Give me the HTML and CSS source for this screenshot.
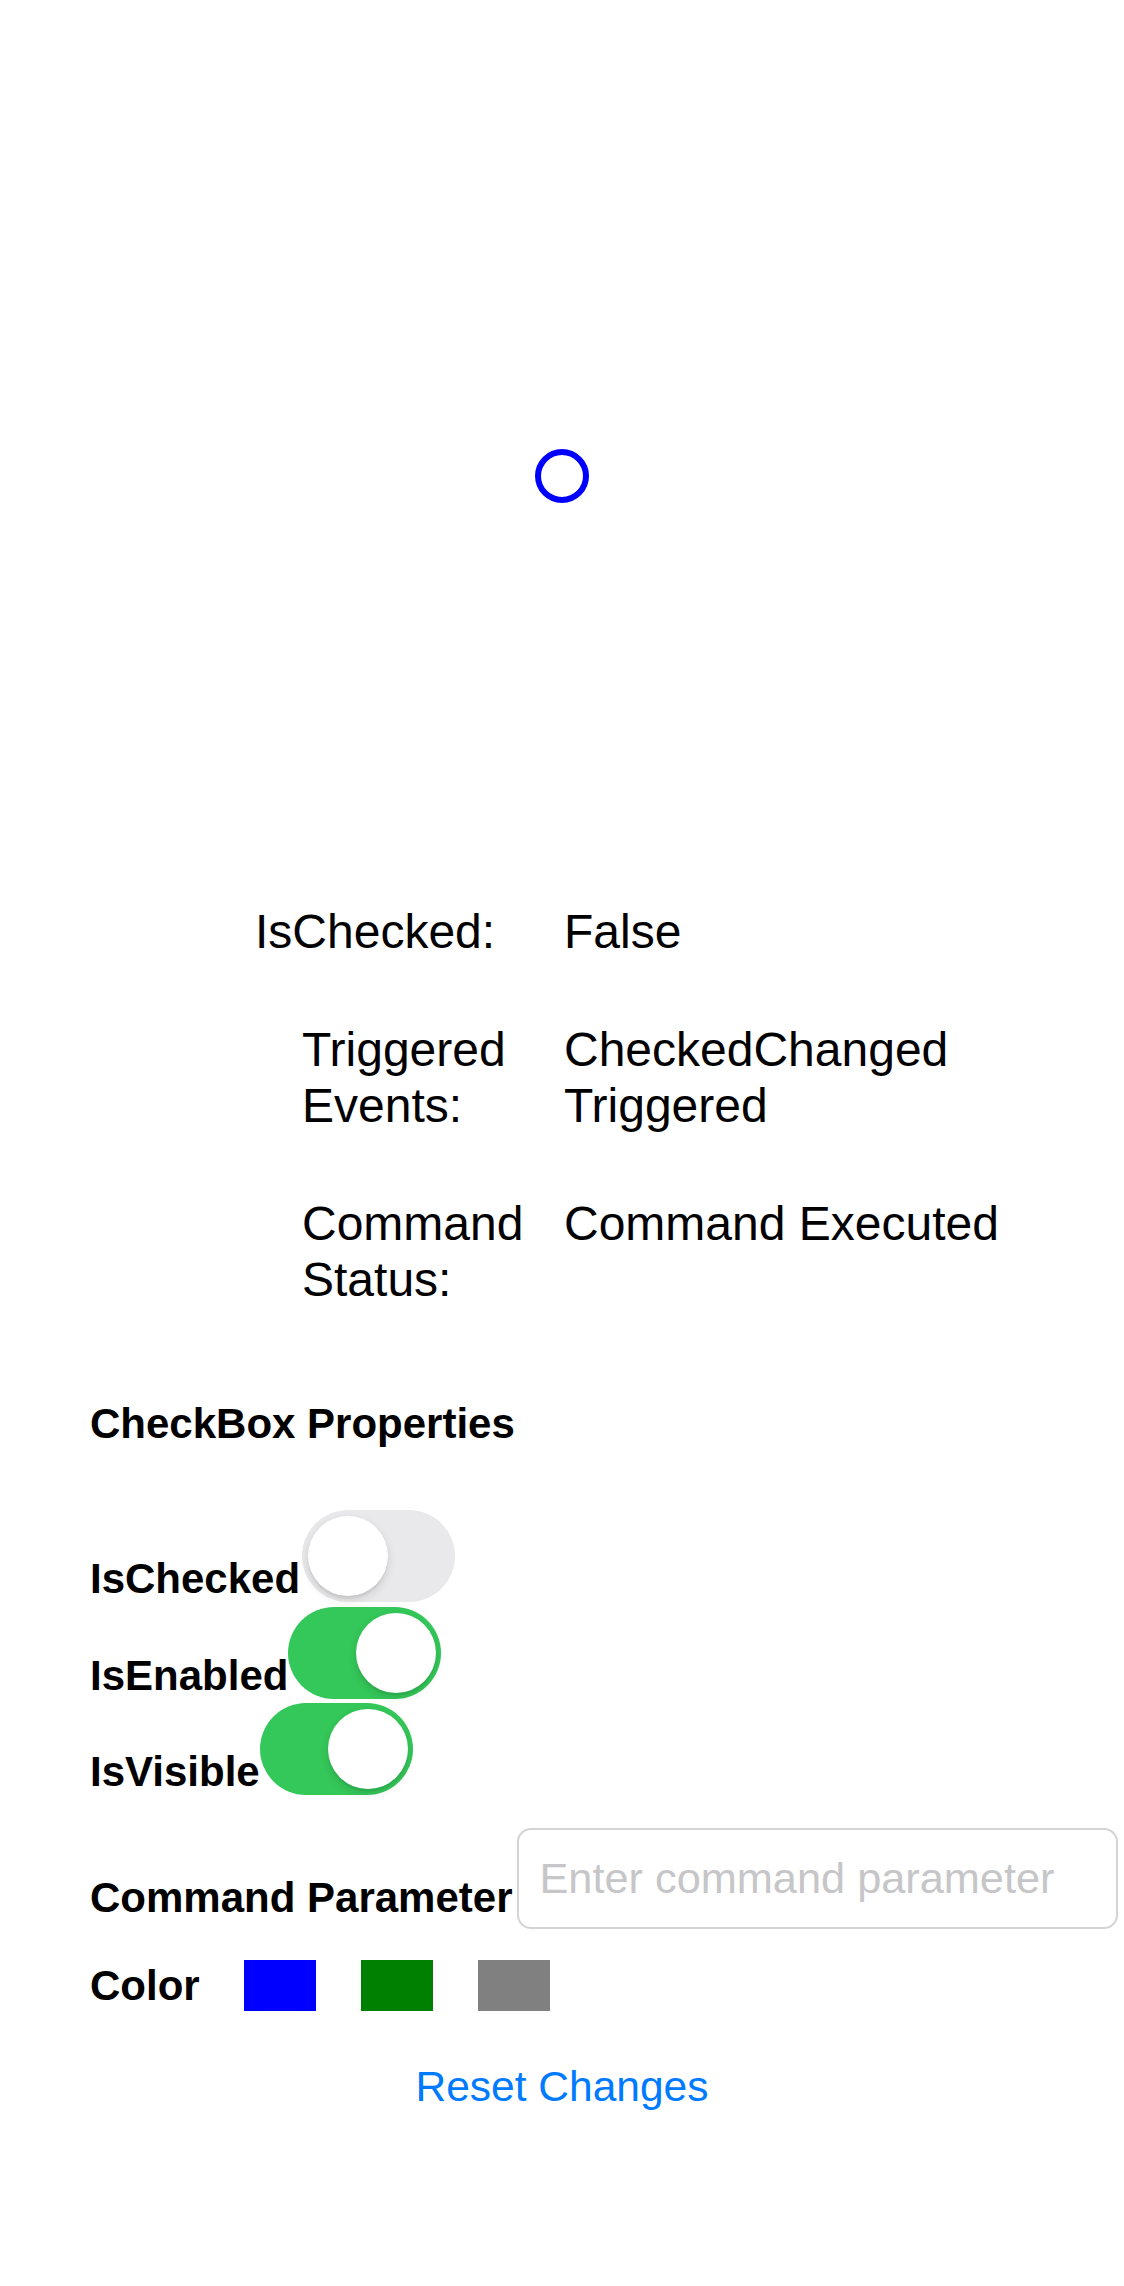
FILE: index.html
```html
<!DOCTYPE html>
<html lang="en">
<head>
<meta charset="utf-8">
<title>CheckBox</title>
<link rel="stylesheet" href="styles.css">
</head>
<body>
<main class="page">
  <section class="stage">
    <div class="checkbox" aria-label="CheckBox"></div>
  </section>

  <section class="status">
    <div class="status-row">
      <span class="key key-wide">IsChecked:</span>
      <span class="val">False</span>
    </div>
    <div class="status-row">
      <span class="key">Triggered Events:</span>
      <span class="val">CheckedChanged Triggered</span>
    </div>
    <div class="status-row">
      <span class="key">Command Status:</span>
      <span class="val">Command Executed</span>
    </div>
  </section>

  <section class="props">
    <h2 class="props-title">CheckBox Properties</h2>

    <div class="toggles">
      <div class="toggle-row">
        <span class="prop-label">IsChecked</span>
        <span class="switch"><span class="knob"></span></span>
      </div>
      <div class="toggle-row">
        <span class="prop-label">IsEnabled</span>
        <span class="switch on"><span class="knob"></span></span>
      </div>
      <div class="toggle-row">
        <span class="prop-label">IsVisible</span>
        <span class="switch on"><span class="knob"></span></span>
      </div>
    </div>

    <div class="param-row">
      <span class="prop-label param-label">Command Parameter</span>
      <input class="entry" type="text" placeholder="Enter command parameter">
    </div>

    <div class="color-row">
      <span class="prop-label color-label">Color</span>
      <span class="swatch swatch-blue"></span>
      <span class="swatch swatch-green"></span>
      <span class="swatch swatch-gray"></span>
    </div>
  </section>

  <div class="reset">
    <button class="reset-btn" type="button">Reset Changes</button>
  </div>
</main>
</body>
</html>
```

FILE: styles.css
```css
html, body {
  margin: 0;
  padding: 0;
  background: #ffffff;
}

body {
  font-family: "Liberation Sans", Arial, sans-serif;
  color: #000000;
}

.page {
  width: 1124px;
  min-height: 2286px;
}

/* Top area with the checkbox */
.stage {
  height: 904px;
  box-sizing: border-box;
  padding-top: 449px;
  display: flex;
  justify-content: center;
  align-items: flex-start;
}

.checkbox {
  width: 54px;
  height: 54px;
  box-sizing: border-box;
  border: 6.5px solid #0000ff;
  border-radius: 50%;
}

/* Status grid */
.status {
  display: flex;
  flex-direction: column;
  gap: 62px;
  padding-left: 255px;
}

.status-row {
  display: grid;
  grid-template-columns: 309px 500px;
  font-size: 48px;
  line-height: 56px;
}

.key {
  padding-left: 47px;
  padding-right: 20px;
}

.key-wide {
  padding-left: 0;
  padding-right: 0;
  white-space: nowrap;
}

.val {
  display: block;
}

/* Properties */
.props {
  margin-top: 91px;
  padding-left: 90px;
}

.props-title {
  margin: 0;
  font-size: 42px;
  font-weight: 700;
  line-height: 50px;
}

.toggles {
  margin-top: 61px;
  display: flex;
  flex-direction: column;
  gap: 4.5px;
}

.toggle-row {
  display: flex;
  align-items: flex-end;
  height: 92px;
}

.prop-label {
  font-size: 42px;
  font-weight: 700;
  line-height: 46px;
  white-space: nowrap;
}

.switch {
  display: flex;
  align-items: center;
  justify-content: flex-start;
  box-sizing: border-box;
  width: 153px;
  height: 92px;
  padding: 0 6px;
  border-radius: 46px;
  background: #e9e9eb;
  margin-left: 2px;
  flex-shrink: 0;
}

.switch.on {
  background: #34c759;
  justify-content: flex-end;
  padding: 0 5px;
  margin-left: 0;
}

.knob {
  width: 80px;
  height: 80px;
  border-radius: 50%;
  background: #ffffff;
  box-shadow: 0 4px 10px rgba(0, 0, 0, 0.12), 0 3px 1px rgba(0, 0, 0, 0.05);
}

/* Command parameter */
.param-row {
  margin-top: 33px;
  display: flex;
  align-items: flex-end;
}

.param-label {
  margin-bottom: 8px;
  margin-right: 5px;
}

.entry {
  width: 601px;
  height: 101px;
  box-sizing: border-box;
  border: 2px solid #d4d4d6;
  border-radius: 14px;
  padding: 0 20px;
  font-family: "Liberation Sans", Arial, sans-serif;
  font-size: 43.3px;
  color: #000000;
  background: #ffffff;
  outline: none;
}

.entry::placeholder {
  color: #c6c6c8;
}

/* Colors */
.color-row {
  margin-top: 31px;
  display: flex;
  align-items: center;
  gap: 45px;
  height: 51px;
}

.color-label {
  width: 109px;
}

.swatch {
  width: 72px;
  height: 51px;
  display: block;
}

.swatch-blue { background: #0000ff; }
.swatch-green { background: #008000; }
.swatch-gray { background: #808080; }

/* Reset */
.reset {
  margin-top: 51px;
  display: flex;
  justify-content: center;
}

.reset-btn {
  border: none;
  background: none;
  padding: 0;
  margin: 0;
  font-family: "Liberation Sans", Arial, sans-serif;
  font-size: 42.5px;
  line-height: 50px;
  color: #007aff;
  cursor: pointer;
}
```
